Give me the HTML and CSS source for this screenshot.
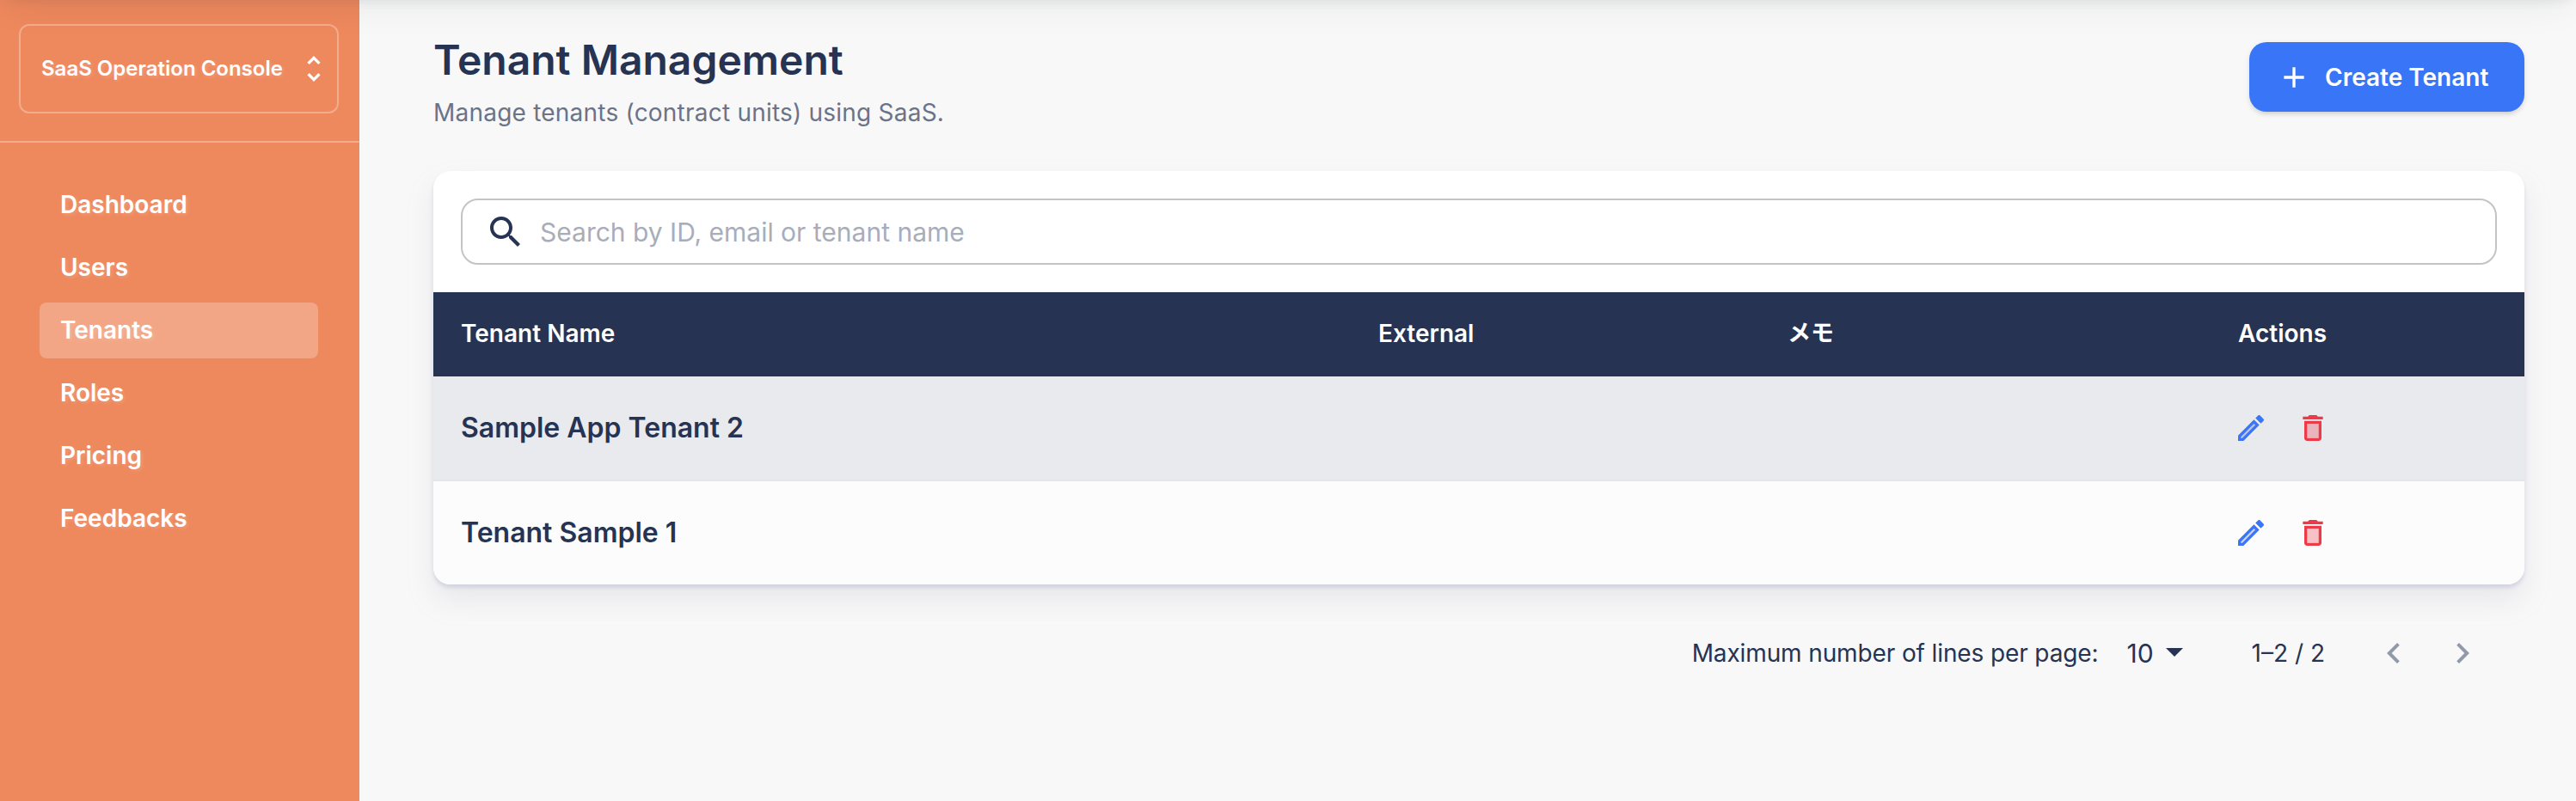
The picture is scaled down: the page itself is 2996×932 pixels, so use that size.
FILE: index.html
```html
<!DOCTYPE html>
<html lang="en">
<head>
<meta charset="utf-8">
<title>Tenant Management</title>
<link rel="stylesheet" href="styles.css">
</head>
<body>
<svg class="defs" aria-hidden="true">
  <symbol id="i-edit" viewBox="0 0 24 24"><path opacity=".3" d="M5 18.08V19h.92l9.06-9.06-.92-.92z"/><path d="M20.71 7.04c.39-.39.39-1.02 0-1.41l-2.34-2.34c-.2-.2-.45-.29-.71-.29s-.51.1-.7.29l-1.83 1.83 3.75 3.75 1.83-1.83zM3 17.25V21h3.75L17.81 9.94l-3.75-3.75L3 17.25zM5.92 19H5v-.92l9.06-9.06.92.92L5.92 19z"/></symbol>
  <symbol id="i-delete" viewBox="0 0 24 24"><path opacity=".3" d="M8 9h8v10H8z"/><path d="M15.5 4l-1-1h-5l-1 1H5v2h14V4zM6 19c0 1.1.9 2 2 2h8c1.1 0 2-.9 2-2V7H6v12zM8 9h8v10H8V9z"/></symbol>
</svg>
<div class="topbar"></div>
<div class="app">
  <aside class="sidebar">
    <div class="brand">
      <button class="switcher">
        <span class="brand-name">SaaS Operation Console</span>
        <svg class="icon-md" viewBox="0 0 24 24"><path d="M12 5.83 15.17 9l1.41-1.41L12 3 7.41 7.59 8.83 9 12 5.83zm0 12.34L8.83 15l-1.41 1.41L12 21l4.59-4.59L15.17 15 12 18.17z"/></svg>
      </button>
    </div>
    <nav class="nav">
      <a class="nav-item">Dashboard</a>
      <a class="nav-item">Users</a>
      <a class="nav-item active">Tenants</a>
      <a class="nav-item">Roles</a>
      <a class="nav-item">Pricing</a>
      <a class="nav-item">Feedbacks</a>
    </nav>
  </aside>
  <main class="main">
    <header class="head">
      <div>
        <h1 class="title">Tenant Management</h1>
        <p class="subtitle">Manage tenants (contract units) using SaaS.</p>
      </div>
      <button class="create">
        <svg class="icon-md" viewBox="0 0 24 24"><path d="M19 13h-6v6h-2v-6H5v-2h6V5h2v6h6v2z"/></svg>
        <span>Create Tenant</span>
      </button>
    </header>
    <section class="card">
      <div class="search-wrap">
        <label class="search">
          <svg class="icon-lg" viewBox="0 0 24 24"><path d="M15.5 14h-.79l-.28-.27C15.41 12.59 16 11.11 16 9.5 16 5.91 13.09 3 9.5 3S3 5.91 3 9.5 5.91 16 9.5 16c1.61 0 3.09-.59 4.23-1.57l.27.28v.79l5 4.99L20.49 19l-4.99-5zm-6 0C7.01 14 5 11.99 5 9.5S7.01 5 9.5 5 14 7.01 14 9.5 11.99 14 9.5 14z"/></svg>
          <span class="placeholder">Search by ID, email or tenant name</span>
        </label>
      </div>
      <div class="row row-head">
        <span>Tenant Name</span><span>External</span><span class="memo">メモ</span><span>Actions</span>
      </div>
      <div class="row row-hover">
        <span class="name">Sample App Tenant 2</span><span></span><span></span>
        <span class="actions"><svg class="icon-md edit"><use href="#i-edit"/></svg><svg class="icon-md delete"><use href="#i-delete"/></svg></span>
      </div>
      <div class="row">
        <span class="name">Tenant Sample 1</span><span></span><span></span>
        <span class="actions"><svg class="icon-md edit"><use href="#i-edit"/></svg><svg class="icon-md delete"><use href="#i-delete"/></svg></span>
      </div>
    </section>
    <footer class="pager">
      <span class="pager-label">Maximum number of lines per page:</span>
      <span class="pager-size">10</span>
      <svg class="icon-lg caret" viewBox="0 0 24 24"><path d="m7 10 5 5 5-5z"/></svg>
      <span class="pager-range">1–2 / 2</span>
      <span class="pager-btn"><svg class="icon-lg" viewBox="0 0 24 24"><path d="M15.41 16.59 10.83 12l4.58-4.59L14 6l-6 6 6 6 1.41-1.41z"/></svg></span>
      <span class="pager-btn"><svg class="icon-lg" viewBox="0 0 24 24"><path d="M8.59 16.59 13.17 12 8.59 7.41 10 6l6 6-6 6-1.41-1.41z"/></svg></span>
    </footer>
  </main>
</div>
</body>
</html>
```
FILE: styles.css
```css
* { box-sizing: border-box; }
body {
  margin: 0;
  background: #f8f8f8;
  color: #263352;
  font-family: Inter, "Noto Sans CJK JP", sans-serif;
  font-size: 28px;
  overflow: hidden;
}
button { font: inherit; border: 0; background: none; color: inherit; text-align: left; }
svg { fill: currentColor; flex: none; display: block; }
.defs { position: absolute; width: 0; height: 0; }
.icon-md { width: 40px; height: 40px; }
.icon-lg { width: 48px; height: 48px; }

/* Header bar resting just above the viewport; only its shadow shows */
.topbar {
  position: fixed;
  top: -160px;
  left: 0;
  right: 0;
  height: 160px;
  box-shadow: 0 4px 16px -6px rgba(34, 51, 84, .14), 0 10px 44px -8px rgba(0, 0, 0, .08);
  z-index: 2;
}
.app { display: flex; height: 932px; }

.sidebar { flex: none; width: 418px; background: #ee885d; color: #fff; font-weight: 600; }
.brand { height: 166px; padding: 28px 24px 0 22px; border-bottom: 2px solid rgba(255, 255, 255, .3); }
.switcher {
  display: flex;
  align-items: center;
  justify-content: space-between;
  width: 372px;
  height: 104px;
  padding: 0 7px 0 24px;
  border: 2px solid rgba(255, 255, 255, .3);
  border-radius: 12px;
  font-size: 24px;
  font-weight: 600;
  white-space: nowrap;
  text-shadow: 2px 2px 4px rgba(255, 255, 255, .17);
}
.brand-name { padding-bottom: 2px; }
.nav { display: flex; flex-direction: column; gap: 8px; padding: 40px 48px 0 46px; }
.nav-item {
  height: 65px;
  padding-left: 24px;
  line-height: 65px;
  border-radius: 8px;
  text-shadow: 2px 2px 4px rgba(255, 255, 255, .17);
}
.active { background: rgba(255, 255, 255, .25); }

.main { flex: 1; padding: 0 60px 0 86px; }
.head { display: flex; justify-content: space-between; height: 199px; padding-top: 40px; }
.title { margin: 0; font-size: 48px; line-height: 60px; font-weight: 600; }
.subtitle { margin: 11px 0 0; line-height: 40px; color: #6b7389; letter-spacing: .22px; }
.create {
  display: flex;
  align-items: center;
  gap: 16px;
  width: 320px;
  height: 81px;
  margin-top: 9px;
  padding: 0 0 0 32px;
  border-radius: 20px;
  background: #3875f7;
  color: #fff;
  font-weight: 600;
  white-space: nowrap;
  box-shadow: 0 6px 2px -4px rgba(0, 0, 0, .04), 0 4px 4px rgba(0, 0, 0, .07), 0 2px 10px rgba(0, 0, 0, .06);
}

.card {
  height: 481px;
  border-radius: 20px;
  background: #fff;
  overflow: hidden;
  box-shadow: 0 18px 32px rgba(159, 162, 191, .18), 0 4px 4px rgba(159, 162, 191, .32);
}
.search-wrap { height: 141px; padding: 32px 32px 0; }
.search {
  display: flex;
  align-items: center;
  gap: 16px;
  height: 77px;
  padding-left: 26px;
  border: 2px solid #c4c4c4;
  border-radius: 20px;
}
.placeholder { font-size: 30px; color: #a8adba; }
.row {
  display: grid;
  grid-template-columns: 1067px 478px 522px 365px;
  align-items: center;
  height: 120px;
  background: #fcfcfc;
}
.row > span { padding-left: 32px; }
.row-head { height: 98px; padding-bottom: 2px; background: #263352; color: #fff; font-weight: 600; line-height: 40px; }
.row > .memo { padding-left: 30px; font-size: 27px; }
.row-hover { height: 122px; background: #e9eaee; border-bottom: 2px solid #e5e6ea; }
.name { font-size: 32px; line-height: 40px; font-weight: 600; }
.actions { display: flex; gap: 32px; }
.row > .actions { padding-left: 27px; }
.edit { color: #3875f7; }
.delete { color: #ee3948; }

.pager { display: flex; align-items: center; justify-content: flex-end; height: 80px; margin-top: 40px; padding-right: 32px; white-space: nowrap; }
.pager-label { letter-spacing: -.12px; }
.pager-size { margin-left: 33px; font-size: 30px; }
.caret { margin-bottom: 4px; }
.pager-range { margin: 0 40px 0 66px; }
.pager-btn { padding: 16px; color: #9299a8; }
```
